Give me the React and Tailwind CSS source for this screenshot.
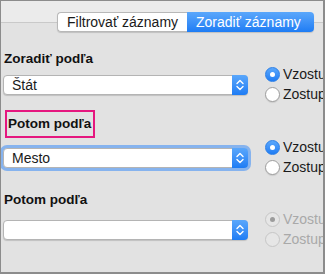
import React from "react";

function Chevrons() {
  return (
    <svg width="16" height="20" viewBox="0 0 16 20" fill="none">
      <path d="M5 8.5 L8 5.5 L11 8.5" stroke="white" strokeWidth="1.4" strokeLinecap="round" strokeLinejoin="round" />
      <path d="M5 11.5 L8 14.5 L11 11.5" stroke="white" strokeWidth="1.4" strokeLinecap="round" strokeLinejoin="round" />
    </svg>
  );
}

function Select({ value, focused }) {
  return (
    <div
      className={
        "flex shrink-0 h-[20px] w-[245px] rounded-[4px] bg-white border border-[#b4b4b4] shadow-[0_1px_1px_rgba(0,0,0,0.15)] " +
        (focused ? "ring-[3px] ring-[#86b3ee]" : "")
      }
    >
      <div className="flex-1 pl-[8px] text-[14px] leading-[18px] text-[#1a1a1a]">{value}</div>
      <div className="w-[16px] -my-px -mr-px rounded-r-[4px] bg-gradient-to-b from-[#5aa7fb] to-[#1d7cf4] flex items-center justify-center">
        <Chevrons />
      </div>
    </div>
  );
}

function Radio({ label, checked, disabled }) {
  let circle;
  if (disabled) {
    circle = "bg-[#e6e6e6] border border-[#c6c6c6]";
  } else if (checked) {
    circle = "bg-gradient-to-b from-[#5aa7fb] to-[#1d7cf4] border border-[#2b7fe8]";
  } else {
    circle = "bg-white border border-[#9e9e9e] shadow-[0_1px_1px_rgba(0,0,0,0.1)]";
  }
  return (
    <div className="flex items-center h-[15px]">
      <div className={"w-[15px] h-[15px] rounded-full flex items-center justify-center shrink-0 " + circle}>
        {checked && (
          <div className={"w-[5px] h-[5px] rounded-full " + (disabled ? "bg-[#9c9c9c]" : "bg-white")} />
        )}
      </div>
      <span className={"ml-[3px] text-[14px] leading-[15px] whitespace-nowrap " + (disabled ? "text-[#a9a9a9]" : "text-[#1a1a1a]")}>
        {label}
      </span>
    </div>
  );
}

function Row({ value, focused, disabled, className }) {
  return (
    <div className={"flex items-center h-[35px] " + className}>
      <Select value={value} focused={focused} />
      <div className="ml-[17px] shrink-0 flex flex-col gap-[5px]">
        <Radio label="Vzostupne" checked disabled={disabled} />
        <Radio label="Zostupne" disabled={disabled} />
      </div>
    </div>
  );
}

export default function App() {
  return (
    <div
      className="w-[325px] h-[274px] overflow-hidden bg-[#e2e2e2] border border-[#8c8c8c] border-b-2 border-r-2"
      style={{ fontFamily: '"Liberation Sans", Arial, sans-serif' }}
    >
      <div className="h-[22px] bg-[#ebebeb] border-b border-[#c9c9c9] pt-[11px] pl-[56px]">
        <div className="relative z-10 flex h-[20px] w-fit rounded-[4px] shadow-[0_1px_1px_rgba(0,0,0,0.15)]">
          <div className="w-[130px] h-[20px] bg-white border border-[#b8b8b8] border-r-0 rounded-l-[4px] text-[14px] leading-[18px] text-[#1a1a1a] pl-[9px] whitespace-nowrap">
            Filtrovať záznamy
          </div>
          <div className="w-[127px] h-[20px] bg-gradient-to-b from-[#5aa7fb] to-[#1d7cf4] rounded-r-[4px] text-[14px] leading-[20px] text-white pl-[9px] whitespace-nowrap">
            Zoradiť záznamy
          </div>
        </div>
      </div>

      <div className="pl-[2px]">
        <div className="mt-[28px] pl-[1px] text-[13.5px] leading-[16px] font-bold text-[#111]">Zoradiť podľa</div>
        <Row value="Štát" className="mt-[0px]" />

        <div className="mt-[8px] ml-[2px] w-[90px] h-[28px] border-2 border-[#e5177f] pt-[4px] pl-[1px] text-[13.5px] leading-[16px] font-bold text-[#111] whitespace-nowrap">
          Potom podľa
        </div>
        <Row value="Mesto" focused className="mt-[2px]" />

        <div className="mt-[17px] pl-[1px] text-[13.5px] leading-[16px] font-bold text-[#111]">Potom podľa</div>
        <Row value="" disabled className="mt-[4px]" />
      </div>
    </div>
  );
}
